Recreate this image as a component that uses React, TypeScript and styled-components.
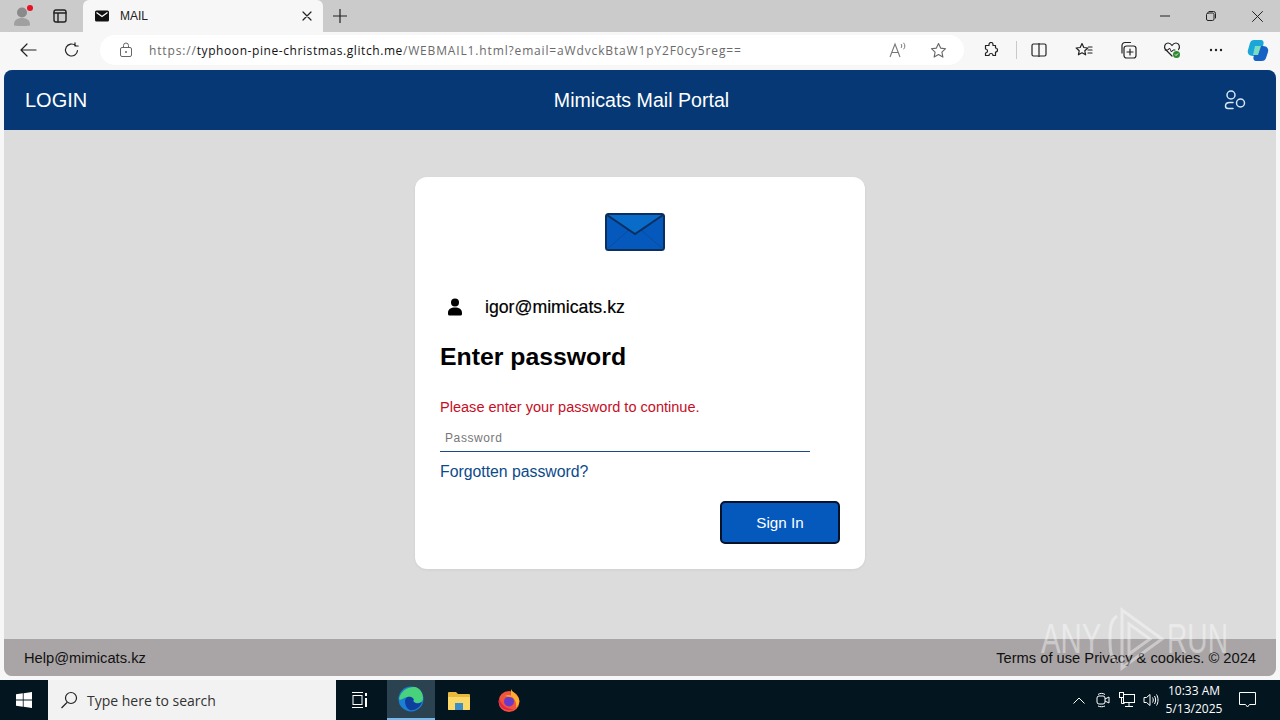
import React from 'react'
import styled, { createGlobalStyle } from 'styled-components'

const GlobalStyle = createGlobalStyle`
	html, body {
		margin: 0;
		padding: 0;
		width: 1280px;
		height: 720px;
		overflow: hidden;
		background: #f7f7f7;
		font-family: "Liberation Sans", Arial, sans-serif;
	}
	* {
		box-sizing: border-box;
	}
`

const Screen = styled.div`
	position: relative;
	display: flex;
	flex-direction: column;
	width: 1280px;
	height: 720px;
`

/* browser tab strip */
const TabStrip = styled.div`
	display: flex;
	align-items: flex-end;
	height: 32px;
	background: #cbcbcb;
	flex-shrink: 0;
`
const ProfileSlot = styled.div`
	position: relative;
	display: flex;
	align-items: center;
	justify-content: center;
	width: 38px;
	height: 32px;
	padding-left: 6px;
`
const ProfileDot = styled.span`
	position: absolute;
	top: 5px;
	left: 27px;
	width: 6px;
	height: 6px;
	border-radius: 50%;
	background: #e81123;
`
const TabAction = styled.div`
	display: flex;
	align-items: center;
	justify-content: center;
	width: ${p => p.$width || 40}px;
	height: 32px;
`
const Tab = styled.div`
	display: flex;
	align-items: center;
	width: 240px;
	height: 32px;
	margin-left: 2px;
	padding: 0 11px 0 12px;
	background: #f7f7f7;
	border-radius: 6px 6px 0 0;
`
const TabTitle = styled.span`
	flex: 1;
	margin-left: 11px;
	font-size: 12px;
	color: #222;
`
const WindowControls = styled.div`
	display: flex;
	margin-left: auto;
`
const WindowButton = styled.div`
	display: flex;
	align-items: center;
	justify-content: center;
	width: 46px;
	height: 32px;
`

/* address bar row */
const Toolbar = styled.div`
	display: flex;
	align-items: center;
	height: 38px;
	padding: 0 0 2px 6px;
	background: #f7f7f7;
	flex-shrink: 0;
`
const NavButton = styled.div`
	display: flex;
	align-items: center;
	justify-content: center;
	width: 44px;
	height: 32px;
`
const AddressBar = styled.div`
	display: flex;
	align-items: center;
	flex-shrink: 0;
	width: 864px;
	height: 30px;
	margin-left: 6px;
	padding: 0 17px 0 19px;
	background: #fff;
	border-radius: 15px;
`
const Url = styled.div`
	flex: 1;
	margin-left: 16px;
	font-family: "Open Sans", sans-serif;
	font-size: 12px;
	letter-spacing: 0.85px;
	color: #6a6a6a;
	white-space: nowrap;
`
const UrlHost = styled.span`
	color: #111;
	letter-spacing: 0.58px;
`
const ReadAloud = styled.div`
	display: flex;
	align-items: center;
	justify-content: center;
	width: 40px;
	height: 32px;
	margin-right: 12px;
`
const ToolIcon = styled.div`
	display: flex;
	align-items: center;
	justify-content: center;
	flex-shrink: 0;
	width: ${p => p.$width || 44}px;
	height: 32px;
	margin-left: ${p => p.$offset || 0}px;
`
const ToolDivider = styled.div`
	flex-shrink: 0;
	width: 1px;
	height: 18px;
	background: #c9c9c9;
`

/* the page itself */
const Page = styled.div`
	flex: 1;
	display: flex;
	flex-direction: column;
	margin: 0 4px 4px;
	border-radius: 8px;
	overflow: hidden;
	background: #dcdcdc;
`
const Header = styled.header`
	display: flex;
	align-items: center;
	justify-content: space-between;
	height: 60px;
	padding: 0 30px 0 21px;
	background: #053874;
	color: #fff;
`
const Login = styled.div`
	width: 180px;
	font-size: 20px;
`
const PortalTitle = styled.div`
	margin-left: 12px;
	font-size: 19.6px;
`
const HeaderIcon = styled.div`
	display: flex;
	justify-content: flex-end;
	width: 180px;
`
const Main = styled.main`
	flex: 1;
	display: flex;
	justify-content: center;
	align-items: flex-start;
	padding-top: 47px;
`
const Card = styled.div`
	display: flex;
	flex-direction: column;
	width: 450px;
	height: 392px;
	padding: 36px 25px 0;
	background: #fff;
	border-radius: 12px;
	box-shadow: 0 1px 3px rgba(0, 0, 0, 0.06);
`
const MailLogo = styled.div`
	display: flex;
	justify-content: center;
	height: 38px;
	padding-right: 10px;
`
const UserRow = styled.div`
	display: flex;
	align-items: center;
	height: 24px;
	margin-top: 44px;
	padding-left: 8px;
`
const UserEmail = styled.span`
	margin-left: 23px;
	font-size: 17.7px;
	color: #000;
	-webkit-text-stroke: 0.2px #000;
`
const Heading = styled.h1`
	margin: 23px 0 0;
	font-size: 24.8px;
	line-height: 30px;
	font-weight: 700;
	color: #000;
`
const ErrorText = styled.div`
	margin-top: 26px;
	font-size: 14.55px;
	line-height: 18px;
	color: #c50f1f;
`
const PasswordField = styled.div`
	width: 370px;
	height: 33px;
	margin-top: 3px;
	padding: 12px 0 0 5px;
	border-bottom: 1px solid #1b4a85;
	font-size: 12px;
	letter-spacing: 0.6px;
	color: #777;
`
const Forgot = styled.a`
	margin-top: 10px;
	font-size: 15.8px;
	line-height: 20px;
	color: #0b4a8a;
`
const ButtonRow = styled.div`
	display: flex;
	justify-content: flex-end;
	margin-top: 19px;
`
const SignIn = styled.button`
	width: 120px;
	height: 43px;
	background: #0559bd;
	border: 2px solid #03132b;
	border-radius: 5px;
	color: #fff;
	font-family: inherit;
	font-size: 15.2px;
`
const Footer = styled.footer`
	display: flex;
	align-items: center;
	justify-content: space-between;
	height: 37px;
	padding: 0 20px;
	background: #a9a5a6;
	font-size: 14.7px;
	color: #111;
`

/* recording watermark, sits over the page */
const Watermark = styled.div`
	position: absolute;
	left: 1041px;
	top: 606px;
	display: flex;
	align-items: center;
	height: 66px;
	opacity: 0.4;
	color: #fff;
	pointer-events: none;
`
const WatermarkText = styled.span`
	font-size: 42px;
	transform: scaleX(${p => p.$scale});
	transform-origin: left;
	width: ${p => p.$width}px;
	white-space: nowrap;
`

/* windows taskbar */
const Taskbar = styled.div`
	display: flex;
	align-items: center;
	height: 40px;
	background: #03151f;
	flex-shrink: 0;
`
const StartButton = styled.div`
	display: flex;
	align-items: center;
	justify-content: center;
	width: 48px;
	height: 40px;
`
const SearchBox = styled.div`
	display: flex;
	align-items: center;
	width: 288px;
	height: 40px;
	padding-left: 12px;
	background: #f2f2f2;
	font-family: "Open Sans", sans-serif;
	font-size: 14px;
	color: #333;
`
const SearchLabel = styled.span`
	margin-left: 9px;
`
const TaskButton = styled.div`
	display: flex;
	align-items: center;
	justify-content: center;
	width: 48px;
	height: 40px;
	margin-left: ${p => p.$gap || 0}px;
	${p => p.$active && 'background: #2b4350; border-bottom: 2px solid #76b9ed;'}
`
const Tray = styled.div`
	display: flex;
	align-items: center;
	margin-left: auto;
	height: 40px;
`
const TrayIcon = styled.div`
	display: flex;
	align-items: center;
	justify-content: center;
	width: 24px;
	height: 40px;
`
const Clock = styled.div`
	width: 62px;
	text-align: center;
	font-family: "Open Sans", sans-serif;
	font-size: 12px;
	line-height: 18px;
	color: #fff;
`
const NotifyButton = styled.div`
	display: flex;
	align-items: center;
	justify-content: center;
	width: 44px;
	height: 40px;
	margin-right: 11px;
`

const stroke = { fill: 'none', stroke: '#222', strokeWidth: 1.2, strokeLinecap: 'round' as const, strokeLinejoin: 'round' as const }

const App: React.FC = () => {
	return (
		<Screen>
			<GlobalStyle />
			<TabStrip>
				<ProfileSlot>
					<svg width="18" height="20" viewBox="0 0 18 20">
						<circle cx="9" cy="6.5" r="5" fill="#8a8a8a" />
						<path d="M1 19c0-5 3-7 8-7s8 2 8 7c0 .6-1 1-8 1s-8-.4-8-1z" fill="#a0a0a0" />
					</svg>
					<ProfileDot />
				</ProfileSlot>
				<TabAction $width={43}>
					<svg width="16" height="16" viewBox="0 0 16 16">
						<rect x="2" y="2" width="12" height="12" rx="2" {...stroke} strokeWidth={1.4} />
						<path d="M2 5h12M6 5v9" {...stroke} strokeWidth={1.4} />
					</svg>
				</TabAction>
				<Tab>
					<svg width="14" height="12" viewBox="0 0 14 12">
						<rect x="0" y="0.5" width="14" height="11" rx="1.5" fill="#111" />
						<path d="M1.5 2.5 7 6.5l5.5-4" fill="none" stroke="#fff" strokeWidth="1.3" />
					</svg>
					<TabTitle>MAIL</TabTitle>
					<svg width="10" height="10" viewBox="0 0 10 10">
						<path d="M1 1l8 8M9 1l-8 8" {...stroke} />
					</svg>
				</Tab>
				<TabAction $width={34}>
					<svg width="14" height="14" viewBox="0 0 14 14">
						<path d="M7 0v14M0 7h14" {...stroke} />
					</svg>
				</TabAction>
				<WindowControls>
					<WindowButton>
						<svg width="10" height="10" viewBox="0 0 10 10"><path d="M0 5h10" {...stroke} strokeWidth={1} /></svg>
					</WindowButton>
					<WindowButton>
						<svg width="10" height="10" viewBox="0 0 10 10">
							<rect x="0.5" y="2" width="7.5" height="7.5" rx="1.5" {...stroke} strokeWidth={1} />
							<path d="M3 .5h4.500a2 2 0 0 1 2 2V7" {...stroke} strokeWidth={1} />
						</svg>
					</WindowButton>
					<WindowButton>
						<svg width="11" height="11" viewBox="0 0 11 11"><path d="M.5.5l10 10M10.500.5l-10 10" {...stroke} strokeWidth={1} /></svg>
					</WindowButton>
				</WindowControls>
			</TabStrip>

			<Toolbar>
				<NavButton>
					<svg width="17" height="14" viewBox="0 0 17 14"><path d="M16 7H1M7 1 1 7l6 6" {...stroke} /></svg>
				</NavButton>
				<NavButton>
					<svg width="16" height="16" viewBox="0 0 16 16">
						<path d="M13.500 8.500a6 6 0 1 1-2-5M11 .8v3.200h3.200" {...stroke} />
					</svg>
				</NavButton>
				<AddressBar>
					<svg width="14" height="16" viewBox="0 0 14 16">
						<rect x="1.500" y="5.500" width="11" height="9" rx="1.500" fill="none" stroke="#666" />
						<path d="M4.500 5.500V3.500a2.500 2.500 0 0 1 5 0v2" fill="none" stroke="#666" />
						<circle cx="7" cy="10" r="1" fill="#666" />
					</svg>
					<Url>
						https://<UrlHost>typhoon-pine-christmas.glitch.me</UrlHost>/WEBMAIL1.html?email=aWdvckBtaW1pY2F0cy5reg==
					</Url>
					<ReadAloud>
						<svg width="18" height="16" viewBox="0 0 18 16">
							<path d="M1 15 6 2l5 13M3 10.500h6" fill="none" stroke="#777" strokeWidth="1.100" />
							<path d="M12 2c1 1 1 3 0 4M14.500 .8c1.800 2 1.800 4.500 0 6.500" fill="none" stroke="#777" />
						</svg>
					</ReadAloud>
					<svg width="17" height="17" viewBox="0 0 17 17">
						<path d="m8.500 1.500 2.100 4.600 5 .6-3.700 3.400 1 5-4.400-2.500-4.400 2.500 1-5L1.400 6.700l5-.6z" fill="none" stroke="#666" strokeWidth="1.100" strokeLinejoin="round" />
					</svg>
				</AddressBar>
				<ToolIcon $width={50} $offset={2}>
					<svg width="16" height="16" viewBox="0 0 16 16">
						<path d="M6 2.500a2 2 0 0 1 4 0V3.500h2.500V6a2 2 0 0 1 0 4v3.500H10a2 2 0 0 0-4 0H2.500V11a2 2 0 0 0 0-4V3.500H6z" {...stroke} />
					</svg>
				</ToolIcon>
				<ToolDivider />
				<ToolIcon>
					<svg width="16" height="14" viewBox="0 0 16 14">
						<path d="M7 1H2.500A1.500 1.500 0 0 0 1 2.500v9A1.500 1.500 0 0 0 2.500 13H7M9 1h4.500A1.500 1.500 0 0 1 15 2.500v9a1.500 1.500 0 0 1-1.500 1.500H9M8 0v14" {...stroke} />
					</svg>
				</ToolIcon>
				<ToolIcon $offset={1}>
					<svg width="18" height="16" viewBox="0 0 18 16">
						<path d="m7 1.500 1.800 4 4 .5-3 2.800.8 4L7 10.800 3.400 12.800l.8-4-3-2.800 4-.5z" {...stroke} />
						<path d="M13 8h4M13 11h4M13.500 5h3.500" {...stroke} />
					</svg>
				</ToolIcon>
				<ToolIcon>
					<svg width="18" height="18" viewBox="0 0 18 18">
						<rect x="5" y="5" width="12" height="12" rx="2.500" {...stroke} />
						<path d="M11 8v6M8 11h6M3 12V4.500A3 3 0 0 1 6 1.500h5.500" {...stroke} />
					</svg>
				</ToolIcon>
				<ToolIcon>
					<svg width="18" height="18" viewBox="0 0 18 18">
						<path d="M9 15 2.500 8.500C.5 6 2 2 5 2c2 0 3 1 4 2.500C10 3 11 2 13 2c3 0 4.500 4 2.500 6.500" {...stroke} />
						<path d="M2 9h3l1.500-2 2 4 1.500-2h2" {...stroke} strokeWidth={1} />
						<circle cx="13.500" cy="13.500" r="3.500" fill="#2e8b2e" />
						<path d="m12 13.500 1 1 2-2" fill="none" stroke="#fff" />
					</svg>
				</ToolIcon>
				<ToolIcon>
					<svg width="14" height="4" viewBox="0 0 14 4">
						<circle cx="2" cy="2" r="1.200" fill="#222" />
						<circle cx="7" cy="2" r="1.200" fill="#222" />
						<circle cx="12" cy="2" r="1.200" fill="#222" />
					</svg>
				</ToolIcon>
				<ToolIcon $width={40}>
					<svg width="24" height="24" viewBox="0 0 24 24">
						<path d="M8 2h7c2 0 3 2 2.500 4L15 15c-.5 2-2 3-4 3H7c-4 0-6-3-5-6l2-7c.6-2 2-3 4-3z" fill="#1aa6d8" />
						<path d="M11 8h6c4 0 6 3 5 6l-2 6c-.6 2-2 3-4 3H10c-2 0-3-2-2.500-4L10 10c.2-1 .5-2 1-2z" fill="#1662c4" />
						<path d="M9 8h6l-3 9H7z" fill="#7adcc0" />
					</svg>
				</ToolIcon>
			</Toolbar>

			<Page>
				<Header>
					<Login>LOGIN</Login>
					<PortalTitle>Mimicats Mail Portal</PortalTitle>
					<HeaderIcon>
						<svg width="22" height="20" viewBox="0 0 22 20">
							<circle cx="7" cy="5" r="4" fill="none" stroke="#d6e6f7" strokeWidth="1.500" />
							<circle cx="16.500" cy="13" r="4" fill="none" stroke="#d6e6f7" strokeWidth="1.500" />
							<path d="M9 12.500H5.500C3 12.500 1.500 14 1.500 16c0 1.500 1 2.500 2.500 2.500h5" fill="none" stroke="#d6e6f7" strokeWidth="1.500" strokeLinecap="round" />
						</svg>
					</HeaderIcon>
				</Header>
				<Main>
					<Card>
						<MailLogo>
							<svg width="60" height="38" viewBox="0 0 60 38">
								<rect x="1" y="1" width="58" height="36" rx="2.500" fill="#0559bd" stroke="#0b2f5e" strokeWidth="2" />
								<path d="M2 2h56L30 21z" fill="#0a6cc9" />
								<path d="M2 36 24 17M58 36 36 17" fill="none" stroke="#0a4c9c" />
								<path d="M2 2 30 21 58 2" fill="none" stroke="#0b2f5e" strokeWidth="2" />
							</svg>
						</MailLogo>
						<UserRow>
							<svg width="14" height="18" viewBox="0 0 14 18">
								<circle cx="7" cy="4.500" r="4" fill="#000" />
								<path d="M0 15c0-4 3-5.500 7-5.500s7 1.500 7 5.500v1a1.500 1.500 0 0 1-1.500 1.500h-11A1.500 1.500 0 0 1 0 16z" fill="#000" />
							</svg>
							<UserEmail>igor@mimicats.kz</UserEmail>
						</UserRow>
						<Heading>Enter password</Heading>
						<ErrorText>Please enter your password to continue.</ErrorText>
						<PasswordField>Password</PasswordField>
						<Forgot>Forgotten password?</Forgot>
						<ButtonRow>
							<SignIn>Sign In</SignIn>
						</ButtonRow>
					</Card>
				</Main>
				<Footer>
					<span>Help@mimicats.kz</span>
					<span>Terms of use Privacy &amp; cookies. © 2024</span>
				</Footer>
			</Page>

			<Watermark>
				<WatermarkText $scale={0.7} $width={64}>ANY</WatermarkText>
				<svg width="62" height="66" viewBox="0 0 62 66">
					<path d="M12 10C6 14 5 20 5 33s1 19 7 23" fill="none" stroke="#fff" strokeWidth="3" />
					<path d="M17 4v58l40-29zM24 18v30l21-15z" fill="none" stroke="#fff" strokeWidth="3" />
				</svg>
				<WatermarkText $scale={0.67} $width={60}>RUN</WatermarkText>
			</Watermark>

			<Taskbar>
				<StartButton>
					<svg width="16" height="16" viewBox="0 0 16 16">
						<path d="M0 2.300 6.800 1.300v6.300H0zM7.600 1.200 16 0v7.600H7.600zM0 8.400h6.800v6.300L0 13.700zM7.600 8.400H16V16l-8.400-1.200z" fill="#fff" />
					</svg>
				</StartButton>
				<SearchBox>
					<svg width="18" height="18" viewBox="0 0 18 18">
						<circle cx="11" cy="7" r="5.500" fill="none" stroke="#222" strokeWidth="1.200" />
						<path d="M7 11.500 1.500 17" stroke="#222" strokeWidth="1.200" />
					</svg>
					<SearchLabel>Type here to search</SearchLabel>
				</SearchBox>
				<TaskButton>
					<svg width="16" height="16" viewBox="0 0 16 16">
						<path d="M0 .5h11M0 15.500h11" stroke="#fff" />
						<rect x="1" y="3.500" width="9" height="9" fill="none" stroke="#fff" />
						<path d="M14 1v3M14 6v9" stroke="#fff" strokeWidth="2" />
					</svg>
				</TaskButton>
				<TaskButton $active $gap={3}>
					<svg width="26" height="26" viewBox="0 0 26 26">
						<circle cx="13" cy="13" r="12.500" fill="#1b7fd4" />
						<path d="M1 13C3 4 11 .5 17 1c5 1 8 6 8 11 0 3-2 5-6 5-3 0-4-2-3-3-1-3-4-4-7-3-4 1-6 4-8 2z" fill="#49d27c" />
						<path d="M7 15c0-3 3-5 6-4s3 3 2 4c2 3 6 3 9 1-2 6-8 9-12 8-3-1-5-5-5-9z" fill="#0f3f9e" />
					</svg>
				</TaskButton>
				<TaskButton>
					<svg width="22" height="19" viewBox="0 0 22 19">
						<path d="M0 2a1 1 0 0 1 1-1h7l2 2h11a1 1 0 0 1 1 1v14a1 1 0 0 1-1 1H1a1 1 0 0 1-1-1z" fill="#e8b93e" />
						<path d="M0 6h22v12a1 1 0 0 1-1 1H1a1 1 0 0 1-1-1z" fill="#fbd968" />
						<rect x="7" y="12" width="8" height="7" fill="#3a8fc9" />
					</svg>
				</TaskButton>
				<TaskButton $gap={2}>
					<svg width="24" height="24" viewBox="0 0 24 24">
						<circle cx="12" cy="13.500" r="10.500" fill="#f0543c" />
						<path d="M14 1c1 3 6 5 8 10 1 4-1 7-3 9 1-5-1-9-5-12z" fill="#ffb02e" />
						<path d="M2 10c2 6 7 12 15 11-6 3-14 0-15-7z" fill="#e5234f" />
						<circle cx="12" cy="13.500" r="5" fill="#6a3bc9" />
						<path d="M8 8c3-2 7-1 9 2-3-1-6-1-9-2z" fill="#ff9a2e" />
					</svg>
				</TaskButton>
				<Tray>
					<TrayIcon>
						<svg width="12" height="7" viewBox="0 0 12 7"><path d="m.5 6.500 5.500-5.500 5.500 5.500" fill="none" stroke="#fff" /></svg>
					</TrayIcon>
					<TrayIcon>
						<svg width="14" height="16" viewBox="0 0 14 16">
							<rect x="1" y="4" width="8" height="8" rx="2" fill="none" stroke="#fff" />
							<path d="M9 7l4-2v6l-4-2M2 2.500C4 1 7 1 9 2.500M2 14c2 1 5 1 7 0" fill="none" stroke="#fff" />
						</svg>
					</TrayIcon>
					<TrayIcon>
						<svg width="16" height="16" viewBox="0 0 16 16">
							<rect x="4.500" y="2.500" width="11" height="8" fill="none" stroke="#fff" />
							<rect x="0.500" y="0.500" width="4" height="5" fill="#03151f" stroke="#fff" />
							<path d="M10 10.500v4M6 14.500h8M2.500 5.500v6h3" fill="none" stroke="#fff" />
						</svg>
					</TrayIcon>
					<TrayIcon>
						<svg width="16" height="14" viewBox="0 0 16 14">
							<path d="M1 4.500h2.500L7 1.500v11l-3.500-3H1zM9.500 4.500c1 1.500 1 3.500 0 5M11.500 3c1.500 2.500 1.500 5.500 0 8M13.500 1.500c2 3 2 8 0 11" fill="none" stroke="#fff" />
						</svg>
					</TrayIcon>
					<Clock>
						10:33 AM
						<br />
						5/13/2025
					</Clock>
					<NotifyButton>
						<svg width="17" height="16" viewBox="0 0 17 16">
							<path d="M.5.500h16v12h-6l-2 2.500-2-2.500h-6z" fill="none" stroke="#fff" />
						</svg>
					</NotifyButton>
				</Tray>
			</Taskbar>
		</Screen>
	)
}

export default App
